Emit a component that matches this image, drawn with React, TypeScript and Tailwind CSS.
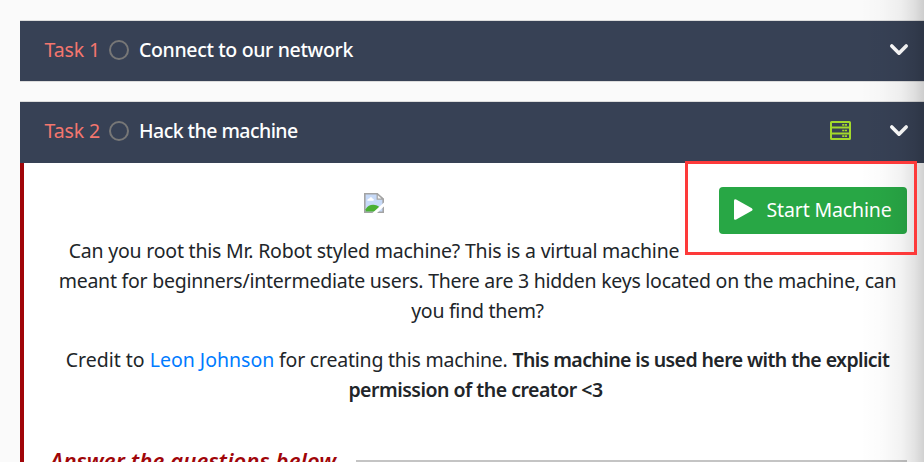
import type { ReactNode } from "react";

function Chevron() {
  return (
    <svg width="20" height="14" viewBox="0 0 20 14" fill="none" stroke="#fff" strokeWidth="3.6" strokeLinecap="round" strokeLinejoin="round">
      <path d="M2.8 3 10 10.2 17.2 3" />
    </svg>
  );
}

function ServerIcon() {
  return (
    <svg width="21" height="19" viewBox="0 0 21 19" fill="none" stroke="#a3d92b" className="-mt-px">
      <rect x="1" y="1" width="19" height="17" rx="0.6" strokeWidth="2" />
      <path d="M1 6.6h19M1 12.400h19" strokeWidth="2" />
      <path d="M12.2 3.8h2.2m.6 0h2M12.2 9.5h2.2m.6 0h2M12.2 15.1h2.2m.6 0h2" strokeWidth="1.7" />
    </svg>
  );
}

function BrokenImage() {
  return (
    <svg width="20" height="20" viewBox="0 0 20 20">
      <path d="M.8.8h12.400l6 5.4v13H.8z" fill="#c7daf8" stroke="#a3a3a3" strokeWidth="1.6" />
      <path d="M13.2.8v5.4h6z" fill="#f4f4f4" stroke="#a3a3a3" strokeWidth="1.2" />
      <path d="M3.4 7.8c-.4-1.8 1.2-2.2 1.8-2 .4-2 3-2 3.4 0 1.6-.2 1.6 2 .4 2z" fill="#fff" />
      <path d="M1.600 18.400v-2.200c3-5.400 10.500-5.800 14.600-1.200l-4.400 3.400z" fill="#4bb034" />
      <path d="M8.400 20 20 9.600v4L13 20z" fill="#fff" />
    </svg>
  );
}

function TaskHeader({ task, title, children }: { task: string; title: ReactNode; children?: ReactNode }) {
  return (
    <div className="flex h-[60px] items-center bg-[#374155] pr-[15px] pb-[2px] pl-[24.500px] text-[19.500px] text-white">
      <span className="w-[64.500px] tracking-[-0.1px] text-[#f4766e]">{task}</span>
      <span className="mr-[10px] size-5 rounded-full border-2 border-[#777]" />
      <span className="font-medium whitespace-nowrap">{title}</span>
      <div className="ml-auto flex items-center gap-[38px]">
        {children}
        <Chevron />
      </div>
    </div>
  );
}

export default function App() {
  return (
    <div className="relative h-[462px] w-[924px] overflow-hidden bg-[#fafafa] pt-5 pl-5 font-['Noto_Sans',sans-serif] text-[#212529]">
      <div className="border-y border-[#dcdcdc]">
        <TaskHeader task="Task 1" title={<span className="tracking-[-0.35px]">Connect to our network</span>} />
      </div>
      <div className="mt-[19px] border-t border-[#dcdcdc]">
        <div className="bg-[#374155] pb-px">
          <TaskHeader task="Task 2" title={<span className="tracking-[-0.54px]">Hack the machine</span>}>
            <ServerIcon />
          </TaskHeader>
        </div>
        <div className="h-[320px] border-l-4 border-[#a00509] bg-white pt-6 pl-5">
          <div className="flex h-[90px]">
            <div className="flex w-[660px] flex-col items-center">
              <div className="mt-[6px] h-[43px]"><BrokenImage /></div>
              <div className="text-[19.500px] leading-[30px] tracking-[-0.21px] whitespace-nowrap">Can you root this Mr. Robot styled machine? This is a virtual machine</div>
            </div>
            <button className="ml-[15px] flex h-[47px] w-[188px] items-center rounded-[4px] bg-[#28a745] pl-[15px] text-[19.500px] text-white">
              <svg width="19" height="21" viewBox="0 0 19 21" fill="#fff" className="-mt-[2px] mr-[13.500px]">
                <path d="M0 1.800Q0-.6 2.200.6L17.800 9.200q1.600 1.300 0 2.600L2.200 20.400Q0 21.600 0 19.200z" />
              </svg>
              <span className="pb-[2px] tracking-[-0.15px] whitespace-nowrap">Start Machine</span>
            </button>
          </div>
          <div className="-mt-[11px] flex w-[867px] flex-col items-center text-[19.500px] leading-[29.600px] whitespace-nowrap">
            <div className="tracking-[-0.245px]">meant for beginners/intermediate users. There are 3 hidden keys located on the machine, can</div>
            <div className="tracking-[-0.28px]">you find them?</div>
            <div className="mt-5">
              <span>Credit to <a className="text-[#007bff]">Leon Johnson</a></span>
              <span className="tracking-[-0.22px]"> for creating this machine. </span>
              <b className="font-semibold tracking-[-0.59px]">This machine is used here with the explicit</b>
            </div>
            <b className="mr-[4px] font-semibold tracking-[-0.5px]">permission of the creator &lt;3</b>
          </div>
          <div className="mt-[40px] ml-[6px] flex w-[857px] items-center">
            <span className="text-[22px] leading-[33px] font-semibold tracking-[0.13px] whitespace-nowrap text-[#a00509] italic">Answer the questions below</span>
            <span className="ml-5 h-[2px] flex-1 bg-[#c4c4c4]" />
          </div>
        </div>
      </div>
      <div className="pointer-events-none absolute inset-y-0 right-0 w-16 bg-[linear-gradient(to_right,transparent,rgba(0,0,0,0.015)_35%,rgba(0,0,0,0.05)_65%,rgba(0,0,0,0.11)_85%,rgba(0,0,0,0.18))]" />
      <div className="absolute top-[161px] left-[685px] h-[94px] w-[232px] border-3 border-[#fd3a3a]" />
    </div>
  );
}
